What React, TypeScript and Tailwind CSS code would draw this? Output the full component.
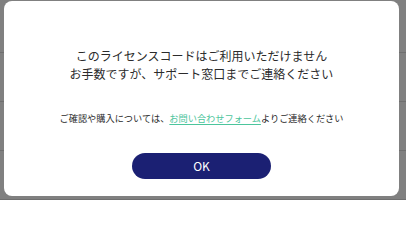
const rows = [0, 1, 2, 3];

const App = () => {
  return (
    <div className="relative h-[200px] w-full overflow-hidden bg-[#808080]">
      <div className="flex flex-col pt-[4px]">
        {rows.map((r) => (
          <div key={r} className="h-[49px] border-b border-[#6f6f6f]" />
        ))}
      </div>

      <div
        className="absolute left-[4px] top-[1px] flex h-[195px] w-[395px] flex-col items-center rounded-[8px] bg-white pt-[46px]"
        style={{ fontFamily: '"Noto Sans CJK JP", "Noto Sans", sans-serif' }}
      >
        <p className="text-center text-[12px] leading-[18px] text-[#2b2b2b]">
          このライセンスコードはご利用いただけません
          <br />
          お手数ですが、サポート窓口までご連絡ください
        </p>
        <p className="mt-[28px] text-[9.2px] leading-[14px] text-[#2b2b2b]">
          ご確認や購入については、
          <a href="#" className="text-[#4cc59c] underline underline-offset-2">
            お問い合わせフォーム
          </a>
          よりご連絡ください
        </p>
        <button className="mt-[28px] h-[26px] w-[139px] rounded-full bg-[#1b2073] text-[12px] text-white">
          OK
        </button>
      </div>
    </div>
  );
};

export default App;
